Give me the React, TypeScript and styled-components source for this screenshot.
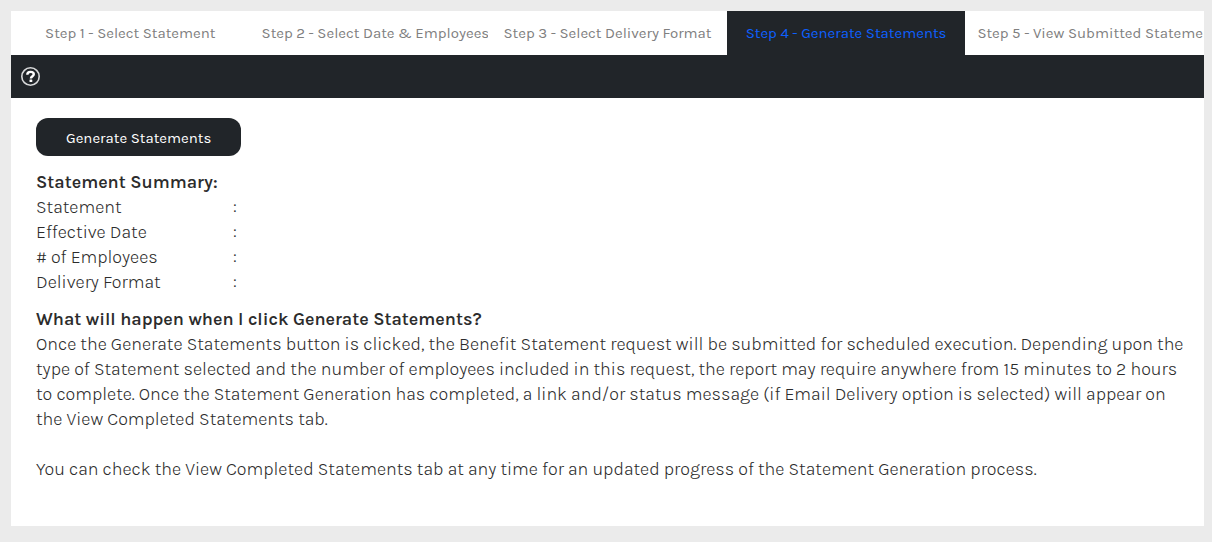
import React from 'react';
import styled, { createGlobalStyle } from 'styled-components';

const GlobalStyle = createGlobalStyle`
  *, *::before, *::after { box-sizing: border-box; }
  body {
    margin: 0;
    background: #ebebeb;
    color: #2c2c2c;
    font-family: Karla, Inter, "Liberation Sans", sans-serif;
    font-size: 18px;
    font-weight: 300;
    line-height: 25px;
  }
`;

const Panel = styled.main`
  margin: 11px 8px 16px 11px;
  background: #fff;
`;

const TabList = styled.div`
  display: flex;
`;

const Tab = styled.button<{ $active: boolean }>`
  flex: 1 1 0;
  min-width: 0;
  height: 44px;
  padding: 0 0 0 12px;
  display: flex;
  align-items: center;
  overflow: hidden;
  white-space: nowrap;
  border: 0;
  background: ${({ $active }) => ($active ? '#212529' : '#fff')};
  color: ${({ $active }) => ($active ? '#0d60ff' : '#808080')};
  font-family: inherit;
  font-size: 15px;
  font-weight: 400;
  cursor: pointer;
`;

const TabLabel = styled.span`
  flex: 1 0 auto;
  padding-right: 12px;
  text-align: center;
`;

const Toolbar = styled.div`
  display: flex;
  align-items: center;
  height: 43px;
  padding: 0 9px;
  background: #212529;
`;

const HelpButton = styled.button`
  display: flex;
  padding: 0;
  border: 0;
  background: none;
  cursor: pointer;
`;

const Content = styled.div`
  padding: 20px 18px 44px 25px;
`;

const PrimaryButton = styled.button`
  display: block;
  height: 38px;
  margin-bottom: 14px;
  padding: 2px 30px 0;
  border: 0;
  border-radius: 12px;
  background: #212529;
  color: #fff;
  font-family: inherit;
  font-size: 15px;
  font-weight: 400;
  cursor: pointer;
`;

const Heading = styled.h2`
  margin: 0;
  font-size: 18px;
  font-weight: 600;
`;

const SummaryTable = styled.table`
  margin-bottom: 12px;
  border-collapse: collapse;

  th, td { padding: 0; }
  th {
    width: 197px;
    font-weight: inherit;
    text-align: left;
  }
`;

const Paragraph = styled.p`
  margin: 0 0 25px;

  &:last-child { margin-bottom: 0; }
`;

const steps = [
  'Step 1 - Select Statement',
  'Step 2 - Select Date & Employees',
  'Step 3 - Select Delivery Format',
  'Step 4 - Generate Statements',
  'Step 5 - View Submitted Statements',
];

const summary = ['Statement', 'Effective Date', '# of Employees', 'Delivery Format'];

const HelpIcon = () => (
  <svg width="21" height="20" viewBox="0 0 21 20" fill="none" aria-hidden="true">
    <circle cx="10.5" cy="9.5" r="8.7" stroke="#d8d9da" strokeWidth="1.6" />
    <path
      d="M7.3 7.7C7.3 5.8 8.5 4.9 10.5 4.9C12.6 4.9 13.8 5.8 13.8 7.3C13.8 9.1 10.9 9.3 10.9 11.5"
      stroke="#fff"
      strokeWidth="2.4"
    />
    <rect x="9.5" y="12.5" width="2.8" height="2.5" rx="0.5" fill="#fff" />
  </svg>
);

export default function App() {
  return (
    <>
      <GlobalStyle />
      <Panel>
        <TabList role="tablist">
          {steps.map((step, index) => (
            <Tab key={step} type="button" role="tab" aria-selected={index === 3} $active={index === 3}>
              <TabLabel>{step}</TabLabel>
            </Tab>
          ))}
        </TabList>
        <Toolbar>
          <HelpButton type="button" aria-label="Help">
            <HelpIcon />
          </HelpButton>
        </Toolbar>
        <Content>
          <PrimaryButton type="button">Generate Statements</PrimaryButton>
          <Heading>Statement Summary:</Heading>
          <SummaryTable>
            <tbody>
              {summary.map((label) => (
                <tr key={label}>
                  <th scope="row">{label}</th>
                  <td>:</td>
                </tr>
              ))}
            </tbody>
          </SummaryTable>
          <Heading>What will happen when I click Generate Statements?</Heading>
          <Paragraph>
            Once the Generate Statements button is clicked, the Benefit Statement request will be
            submitted for scheduled execution. Depending upon the type of Statement selected and the
            number of employees included in this request, the report may require anywhere from 15
            minutes to 2 hours to complete. Once the Statement Generation has completed, a link
            and/or status message (if Email Delivery option is selected) will appear on the View
            Completed Statements tab.
          </Paragraph>
          <Paragraph>
            You can check the View Completed Statements tab at any time for an updated progress of
            the Statement Generation process.
          </Paragraph>
        </Content>
      </Panel>
    </>
  );
}
